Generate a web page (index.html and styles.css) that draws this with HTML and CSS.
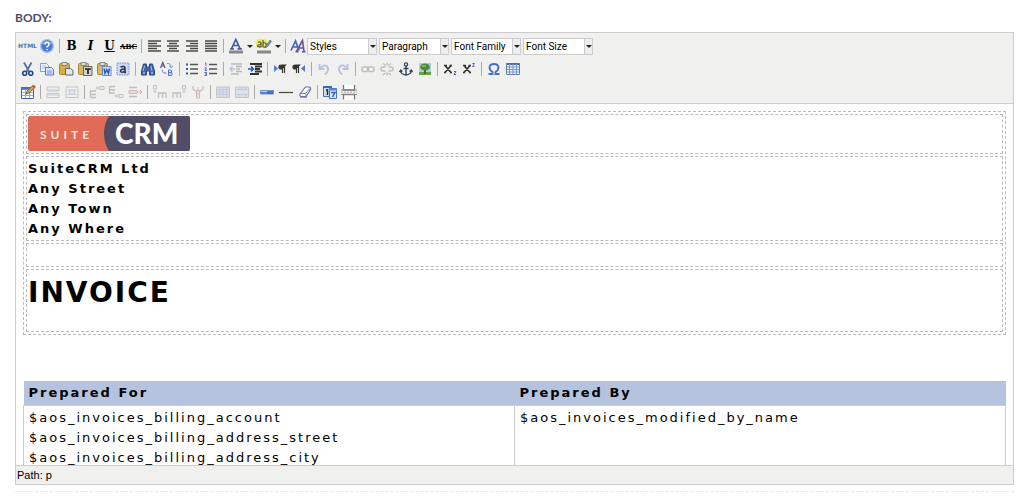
FILE: index.html
```html
<!DOCTYPE html>
<html lang="en">
<head>
<meta charset="utf-8">
<title>PDF Template</title>
<link rel="stylesheet" href="styles.css">
</head>
<body>
<main class="field">
<h2 class="field-label">BODY:</h2>
<section class="editor">
<div class="toolbar">
<div class="row">
<button class="btn" aria-label="Edit HTML source"><span class="html-word">HTML</span></button>
<button class="btn" aria-label="Help"><svg viewBox="0 0 16 16"><circle cx="8" cy="8" r="6.4" fill="#4a7bd4" stroke="#a9c1ec" stroke-width="1.4"/><path d="M3.5 6Q8 1.5 12.5 6" fill="none" stroke="#86a9e8" stroke-width="1.5"/><path d="M6 6.6q0-2 2-2t2 1.8q0 1.2-2 2.4v.8M8 11v1.3" fill="none" stroke="#fff" stroke-width="1.5"/></svg></button>
<span class="sep"></span>
<button class="btn serif bold" aria-label="Bold">B</button>
<button class="btn serif bold italic" aria-label="Italic">I</button>
<button class="btn serif bold under" aria-label="Underline">U</button>
<button class="btn serif strike" aria-label="Strikethrough">ABC</button>
<span class="sep"></span>
<button class="btn" aria-label="Align left"><svg viewBox="0 0 16 16"><path d="M2 3h13M2 5.5h9M2 8h13M2 10.5h9M2 13h13" stroke="#4a4a4a" stroke-width="1.7"/></svg></button>
<button class="btn" aria-label="Align center"><svg viewBox="0 0 16 16"><path d="M2 3h12M4 5.5h8M2 8h12M4 10.5h8M2 13h12" stroke="#4a4a4a" stroke-width="1.7"/></svg></button>
<button class="btn" aria-label="Align right"><svg viewBox="0 0 16 16"><path d="M2 3h12M6 5.5h8M2 8h12M6 10.5h8M2 13h12" stroke="#4a4a4a" stroke-width="1.7"/></svg></button>
<button class="btn" aria-label="Justify"><svg viewBox="0 0 16 16"><path d="M2 3h12M2 5.5h12M2 8h12M2 10.5h12M2 13h12" stroke="#4a4a4a" stroke-width="1.7"/></svg></button>
<span class="sep"></span>
<button class="btn" aria-label="Text colour"><svg viewBox="0 0 16 16"><path d="M3.6 10.5 7.8 1.500l4.200 9M5.300 7.500h5M2.200 10.800h3.600M9.500 10.800h4.300" fill="none" stroke="#3f5f9e" stroke-width="1.700"/><path d="M1 12.500h14v3H1z" fill="#888"/></svg></button>
<button class="drop" aria-label="More text colours"></button>
<button class="btn" aria-label="Highlight colour"><svg viewBox="0 0 16 16"><rect x="0" y="1" width="11" height="9" rx="3" fill="#f0ea62"/><path d="M2 4.200q3-1 3 1v4M5 6.500q-3.400 0-3.400 1.400T5 8.600M7 2v7.200M7 5q3.300-1 3.300 2T7 8.800" fill="none" stroke="#59562d" stroke-width="1.200"/><path d="m9 10 1.500-3 3.500-5 1.500 1.200-3.500 5z" fill="#7492c7" stroke="#596275" stroke-width=".6"/><path d="M1 12.500h14v3H1z" fill="#888"/></svg></button>
<button class="drop" aria-label="More highlight colours"></button>
<span class="sep"></span>
<button class="btn" aria-label="Edit CSS style"><svg viewBox="0 0 16 16"><path d="M1 12.500 5.500 3l3.500 9.500M3 9h5" fill="none" stroke="#4a66b5" stroke-width="1.700"/><path d="m6.500 13.500 6-11 1.500 11M8.800 10H14M5.500 13.700h3M12 13.700h3.500" fill="none" stroke="#6750a4" stroke-width="1.600"/></svg></button>
<div class="pickers">
<span class="picker"><select aria-label="Styles"><option>Styles</option></select></span>
<span class="picker"><select aria-label="Format"><option>Paragraph</option></select></span>
<span class="picker"><select aria-label="Font family"><option>Font Family</option></select></span>
<span class="picker"><select aria-label="Font size"><option>Font Size</option></select></span>
</div>
</div>
<div class="row">
<button class="btn" aria-label="Cut"><svg viewBox="0 0 16 16"><path d="m4 1.500 5 9M11.500 1.500l-5 9" stroke="#54719c" stroke-width="1.800"/><circle cx="4.700" cy="12.200" r="2" fill="none" stroke="#24478f" stroke-width="1.600"/><circle cx="10.800" cy="12.200" r="2" fill="none" stroke="#24478f" stroke-width="1.600"/></svg></button>
<button class="btn" aria-label="Copy"><svg viewBox="0 0 16 16"><path d="M1.500 2.500h6l2 2v6h-8z" fill="#f1f6ff" stroke="#7c9cdc"/><path d="M3 5h4M3 7h4" stroke="#9ab4e8"/><path d="M6.500 6.500h6l2 2v5.500h-8z" fill="#dce8ff" stroke="#5579c8"/><path d="M8 10h5M8 12h5" stroke="#6f92dc"/></svg></button>
<button class="btn" aria-label="Paste"><svg viewBox="0 0 16 16"><rect x="1.500" y="2.500" width="10" height="11" rx="1" fill="#d8ae48" stroke="#a38439"/><path d="M4 1.500h5v3H4z" fill="#d8dbe2" stroke="#777" stroke-width=".8"/><path d="M7.500 7.500h5l2.500 2v4.500H7.500z" fill="#e3e6f2" stroke="#5e6579"/></svg></button>
<button class="btn" aria-label="Paste as plain text"><svg viewBox="0 0 16 16"><rect x="1.500" y="2.500" width="10" height="11" rx="1" fill="#d8b765" stroke="#a38439"/><path d="M4 1.500h5v3H4z" fill="#d8dbe2" stroke="#777" stroke-width=".8"/><path d="M6.500 5.500h8.500v9H6.500z" fill="#cfd2d0" stroke="#666b62"/><path d="M8 8h6M11 8v5" stroke="#222" stroke-width="1.700"/></svg></button>
<button class="btn" aria-label="Paste from Word"><svg viewBox="0 0 16 16"><rect x="1.500" y="2.500" width="10" height="11" rx="1" fill="#d8b765" stroke="#a38439"/><path d="M4 1.500h5v3H4z" fill="#d8dbe2" stroke="#777" stroke-width=".8"/><path d="M6.500 5.500h8.500v9H6.500z" fill="#d5e2fc" stroke="#6887bd"/><path d="m8 7.500 1 5 1.700-4 1.700 4 1-5" fill="none" stroke="#2a56b0" stroke-width="1.400"/></svg></button>
<button class="btn" aria-label="Select all"><svg viewBox="0 0 16 16"><rect x="2" y="2" width="12" height="12" fill="#c9d6f5" stroke="#6f8ce0" stroke-dasharray="1.500 1"/><path d="M5.500 6q4.500-1.500 4.500 1v4.500h1M10 8Q5.500 8 5.500 10t4.500.500" fill="none" stroke="#333" stroke-width="1.500"/></svg></button>
<span class="sep"></span>
<button class="btn" aria-label="Find"><svg viewBox="0 0 16 16"><path d="M3.500 3h3v3h3V3h3l2 7v4H9.500v-4h-3v4h-5v-4z" fill="#4267a8" stroke="#2d4a80"/><path d="M4.500 5 3 10M11 5l1 5" stroke="#a9c2ef"/><path d="M3 12h2M11 12h2" stroke="#dbe6fa"/></svg></button>
<button class="btn" aria-label="Find and replace"><svg viewBox="0 0 16 16"><path d="m1.500 7 2.300-5.500L6 7M2.500 5h3" fill="none" stroke="#4e5c86" stroke-width="1.200"/><path d="M9.500 9v5.500h3q1.500-1.500 0-3 1-2-1-2.500zM9.500 11.500h3" fill="#cfdcff" stroke="#5372d8"/><path d="M8 2.500q4-.500 4 4l-1.800-1.500M12 6.500 14 5M3 8.500q0 4 4 4L5.500 11" fill="none" stroke="#7590e0"/></svg></button>
<span class="sep"></span>
<button class="btn" aria-label="Bullet list"><svg viewBox="0 0 16 16"><path d="M6 3.500h8M6 8h8M6 12.500h8" stroke="#555" stroke-width="1.400"/><path d="M2 2.500h2v2H2zM2 7h2v2H2zM2 11.500h2v2H2z" fill="#3b529e"/></svg></button>
<button class="btn" aria-label="Numbered list"><svg viewBox="0 0 16 16"><path d="M6 3.500h8M6 8h8M6 12.500h8" stroke="#555" stroke-width="1.400"/><path d="M2 2h1v3M1.500 7h2L2 9.500h2M1.500 11.500h2v3h-2M2 13h1.500" fill="none" stroke="#5264c8"/></svg></button>
<span class="sep"></span>
<button class="btn off" aria-label="Outdent"><svg viewBox="0 0 16 16"><path d="M3 3h11M8 5.500h6M8 8h4M8 10.500h6M3 13h8" stroke="#555" stroke-width="1.500"/><path d="M7 8H2m2.500-2.500L2 8l2.500 2.500" fill="none" stroke="#4c75cc" stroke-width="1.500"/></svg></button>
<button class="btn" aria-label="Indent"><svg viewBox="0 0 16 16"><path d="M3 3h12M8 5.500h7M8 8h5M8 10.500h7M3 13h9" stroke="#333" stroke-width="1.800"/><path d="M1 8h5M4 5.500 6.500 8 4 10.500" fill="none" stroke="#2559c8" stroke-width="1.600"/></svg></button>
<span class="sep"></span>
<button class="btn" aria-label="Left to right"><svg viewBox="0 0 16 16"><path d="m2 4 4 3.500L2 11z" fill="#4d7bd0"/><path d="M13.500 4H9.500q-2.500 0-2.500 2t2.500 2h.500zM10.500 4v8M12.500 4v8" fill="#333" stroke="#333" stroke-width="1.200"/></svg></button>
<button class="btn" aria-label="Right to left"><svg viewBox="0 0 16 16"><path d="M8.500 4H4.500Q2 4 2 6t2.500 2H5zM5.500 4v8M7.500 4v8" fill="#333" stroke="#333" stroke-width="1.200"/><path d="m14 4-4 3.500 4 3.500z" fill="#4d7bd0"/></svg></button>
<span class="sep"></span>
<button class="btn off" aria-label="Undo"><svg viewBox="0 0 16 16"><path d="M3.500 3v5h5M4 7.500q4-5 7-2t-2 8" fill="none" stroke="#5271c9" stroke-width="1.800"/></svg></button>
<button class="btn off" aria-label="Redo"><svg viewBox="0 0 16 16"><path d="M12.500 3v5h-5M12 7.500q-4-5-7-2t2 8" fill="none" stroke="#5271c9" stroke-width="1.800"/></svg></button>
<span class="sep"></span>
<button class="btn off" aria-label="Insert link"><svg viewBox="0 0 16 16"><rect x="2" y="6" width="6.500" height="4.500" rx="2" fill="none" stroke="#666" stroke-width="1.500"/><rect x="7.500" y="6" width="6.500" height="4.500" rx="2" fill="none" stroke="#666" stroke-width="1.500"/></svg></button>
<button class="btn off" aria-label="Remove link"><svg viewBox="0 0 16 16"><path d="M6.500 6H4Q2 6 2 8t2 2h2.500M9.500 6H12q2 0 2 2t-2 2H9.500M4 2.500l2.500 2M8 1.500v3M12 2.500l-2.500 2M4 14l2.500-2M8 14.500v-3M12 14l-2.500-2" fill="none" stroke="#666" stroke-width="1.400"/></svg></button>
<button class="btn" aria-label="Anchor"><svg viewBox="0 0 16 16"><circle cx="8" cy="3.500" r="1.600" fill="none" stroke="#39465f" stroke-width="1.300"/><path d="M8 5v9M5.500 7.500h5M2.500 9.500q.500 4 5.500 4.500 5-.500 5.500-4.500M1.500 11l1.200-2 1.800 1.500M14.500 11l-1.200-2-1.800 1.500" fill="none" stroke="#39465f" stroke-width="1.400"/></svg></button>
<button class="btn" aria-label="Insert image"><svg viewBox="0 0 16 16"><path d="M2 2h12v12H2z" fill="#a9cdea"/><path d="M2 11h12v3H2z" fill="#62a83d"/><path d="M7 8h2v5H7z" fill="#79542c"/><ellipse cx="8" cy="6" rx="4.800" ry="3.600" fill="#4c8d32"/><path d="M5 5h4" stroke="#91c450" stroke-width="1.500"/></svg></button>
<span class="sep"></span>
<button class="btn" aria-label="Subscript"><svg viewBox="0 0 16 16"><path d="m3 4.500 6 7M9 4.500l-6 7M2 4.500h3M7.500 4.500H10M2 11.500h2.500M7.500 11.500H10" stroke="#333" stroke-width="1.700"/><path d="M12 10.500h2l-2 3h2" fill="none" stroke="#4d67c5"/></svg></button>
<button class="btn" aria-label="Superscript"><svg viewBox="0 0 16 16"><path d="m3 4.500 6 7M9 4.500l-6 7M2 4.500h3M7.500 4.500H10M2 11.500h2.500M7.500 11.500H10" stroke="#333" stroke-width="1.700"/><path d="M11.500 2.500h2l-2 3h2" fill="none" stroke="#4d67c5"/></svg></button>
<span class="sep"></span>
<button class="btn" aria-label="Special character"><svg viewBox="0 0 16 16"><path d="M2.500 13h4v-2Q3.500 9 3.500 6.500 3.800 3 8 3t4.500 3.500Q12.500 9 9.500 11v2h4" fill="none" stroke="#4a6fcb" stroke-width="1.900"/></svg></button>
<button class="btn" aria-label="Insert table"><svg viewBox="0 0 16 16"><path d="M1.500 2.500h13v11h-13z" fill="#e7effc" stroke="#6c7fa5"/><path d="M1.500 3h13" stroke="#54719e" stroke-width="2"/><path d="M2 6h12M2 8.500h12M2 11h12M4.500 3v10M8 3v10M11.500 3v10" stroke="#7b99ce"/></svg></button>
</div>
<div class="row">
<button class="btn" aria-label="Edit table"><svg viewBox="0 0 16 16"><path d="M1.500 3.500h12v11h-12z" fill="#fff" stroke="#3c66b4"/><path d="M1 4.500h13" stroke="#416fc3" stroke-width="2.500"/><path d="M2 8.500h11M2 11.500h11M5.500 6v8M9.500 6v8" stroke="#8ba8df"/><path d="m6 10 1-3 6-5.500 2 2L9 9z" fill="#dca24e" stroke="#765227" stroke-width=".8"/><path d="m13 1.500 2 2" stroke="#c34e3f" stroke-width="2"/></svg></button>
<span class="sep"></span>
<button class="btn off" aria-label="Row properties"><svg viewBox="0 0 16 16"><path d="M2 3h12v4H2zM2 9.500h12v4H2z" fill="#eee" stroke="#777"/><path d="M3 6h10M3 11h10" stroke="#6f8fce"/></svg></button>
<button class="btn off" aria-label="Cell properties"><svg viewBox="0 0 16 16"><path d="M2 3h12v10.500H2z" fill="#eee" stroke="#777"/><path d="M2 6h12M2 10.500h12" stroke="#aaa"/><path d="M5.500 6h5v4.500h-5z" fill="#c5d1ed" stroke="#758dc5"/></svg></button>
<span class="sep"></span>
<button class="btn off" aria-label="Insert row before"><svg viewBox="0 0 16 16"><path d="M1.500 14v-7H7M2 10.500h5M2 13.500h5" fill="none" stroke="#666" stroke-width="1.300"/><path d="M11 2.500h4v3h-4zM11 4H7.500m1.500-1.500L7.500 4 9 5.500" fill="none" stroke="#666"/></svg></button>
<button class="btn off" aria-label="Insert row after"><svg viewBox="0 0 16 16"><path d="M1.500 2v7H7M2 2.500h5M2 6h5" fill="none" stroke="#666" stroke-width="1.300"/><path d="M11 10.500h4v3h-4zM11 12H7.500M9 10.500 7.500 12 9 13.500" fill="none" stroke="#666"/></svg></button>
<button class="btn off" aria-label="Delete row"><svg viewBox="0 0 16 16"><path d="M2 3.500h8M2 12.500h8" stroke="#666" stroke-width="1.300"/><path d="M2 6.500h8v3H2z" fill="#edaaaa" stroke="#965a5a"/><path d="M10 8h5m-2-2 2 2-2 2" fill="none" stroke="#a85454"/></svg></button>
<span class="sep"></span>
<button class="btn off" aria-label="Insert column before"><svg viewBox="0 0 16 16"><path d="M6.500 14V9H14v5M10.500 9v5" fill="none" stroke="#666" stroke-width="1.300"/><path d="M1.500 1.500h3V5h-3zM3 5v3M1.500 7 3 8.500 4.500 7" fill="none" stroke="#5b6d9f"/></svg></button>
<button class="btn off" aria-label="Insert column after"><svg viewBox="0 0 16 16"><path d="M2 14V9h7.500v5M6 9v5" fill="none" stroke="#666" stroke-width="1.300"/><path d="M11.500 1.500h3V5h-3zM13 5v3M11.500 7 13 8.500 14.500 7" fill="none" stroke="#5b6d9f"/></svg></button>
<button class="btn off" aria-label="Delete column"><svg viewBox="0 0 16 16"><path d="M3 2v3l4 3M13 2v3L9 8" fill="none" stroke="#666" stroke-width="1.200"/><path d="M6.500 6.500h3V14h-3z" fill="#edaaaa" stroke="#a85454"/><path d="M8 6V3" stroke="#a85454"/></svg></button>
<span class="sep"></span>
<button class="btn off" aria-label="Split cells"><svg viewBox="0 0 16 16"><path d="M1.500 3h13v10.500h-13z" fill="#b9caee" stroke="#777"/><path d="M2 5.500h12M2 8h12M2 10.500h12M5 3v10M8 3v10M11.500 3v10" stroke="#6985c1"/></svg></button>
<button class="btn off" aria-label="Merge cells"><svg viewBox="0 0 16 16"><path d="M1.500 3h13v10.500h-13z" fill="#b9caee" stroke="#777"/><path d="M2 5.500h12M2 10.500h12M5 3v2.500M8 3v2.500M11.500 3v2.500M5 10.500v3M11.500 10.500v3" stroke="#6985c1"/></svg></button>
<span class="sep"></span>
<button class="btn" aria-label="Advanced rule"><svg viewBox="0 0 16 16"><path d="M1.500 6.500h13v3.500h-13z" fill="#567fca" stroke="#6d8ec4"/><path d="M2 7.500h6" stroke="#bed3fb"/><path d="M8 9h6" stroke="#2459b0"/></svg></button>
<button class="btn" aria-label="Horizontal rule"><svg viewBox="0 0 16 16"><path d="M1 8.500h14" stroke="#444" stroke-width="1.200"/></svg></button>
<button class="btn" aria-label="Remove formatting"><svg viewBox="0 0 16 16"><path d="M3 10 8.500 3h3.500q2 0 1.500 2.500L9 12.500H4Q2.500 12 3 10z" fill="#fff" stroke="#6b7591" stroke-width="1.200"/><path d="M3.500 9.500H8q1.500.500 1 2.500M8.500 9.500l5-5.500" fill="none" stroke="#6385c8"/><path d="M3 13.200h7" stroke="#5978c4"/></svg></button>
<span class="sep"></span>
<button class="btn" aria-label="Insert date"><svg viewBox="0 0 16 16"><path d="M1.500 2.500h8v10h-8z" fill="#c8daf8" stroke="#4671bd"/><path d="M1 3h9" stroke="#3b69bc" stroke-width="2"/><path d="M4 6h1.500v5" fill="none" stroke="#222" stroke-width="1.400"/><path d="M7.500 4.500h7v10h-7z" fill="#dce7fd" stroke="#4671bd"/><path d="M7 5.500h8" stroke="#5986d5" stroke-width="2"/><path d="M9 8.500h4L10.500 13" fill="none" stroke="#345dad" stroke-width="1.500"/></svg></button>
<button class="btn" aria-label="Page break"><svg viewBox="0 0 16 16"><path d="M2.500 1v5h11V1M2.500 15.500V10.500h11v5" fill="#fff" stroke="#777" stroke-width="1.300"/><path d="M0 6h16M0 10.500h16" stroke="#888"/><path d="M0 8.200h16" stroke="#aaa" stroke-dasharray="2 1"/></svg></button>
</div>
</div>
<div class="canvas">
<table class="company">
<tr><td class="logo-cell"><svg class="logo" viewBox="0 0 162 35" role="img" aria-label="SuiteCRM">
<rect width="162" height="35" rx="2" fill="#e06b56"/>
<path d="M81 0h79a2 2 0 0 1 2 2v31a2 2 0 0 1-2 2H81Q76 27 76 17.500T81 0z" fill="#524d66"/>
<text class="logo-suite" x="12" y="23">SUITE</text><text class="logo-crm" x="87" y="28">CRM</text></svg></td></tr>
<tr><td class="strong">SuiteCRM Ltd<br>Any Street<br>Any Town<br>Any Where</td></tr>
<tr><td>&nbsp;</td></tr>
<tr><td class="title-cell"><h1 class="title">INVOICE</h1></td></tr>
</table>
<table class="parties">
<thead><tr><th>Prepared For</th><th>Prepared By</th></tr></thead>
<tbody><tr><td>$aos_invoices_billing_account<br>$aos_invoices_billing_address_street<br>$aos_invoices_billing_address_city</td><td>$aos_invoices_modified_by_name</td></tr></tbody>
</table>
</div>
<div class="status">Path: p</div>
</section>
<div class="divider"></div>
</main>
</body>
</html>
```
FILE: styles.css
```css
* { box-sizing: border-box; }
body { margin: 0; background: #fff; color: #000; font-family: "DejaVu Sans", Verdana, sans-serif; }
.field { padding: 10px 10px 0 15px; }
.field-label { margin: 0 0 7px; font: bold 12px/15px Lato, sans-serif; color: #534d64; }
.editor { border: 1px solid #ccc; }
.toolbar { display: flex; flex-direction: column; gap: 1px; padding: 2px 2px 0; background: #f0f0ee; border-bottom: 1px solid #ccc; }
.row { display: flex; align-items: center; height: 22px; }
.btn { display: flex; flex: none; align-items: center; justify-content: center; width: 19px; height: 20px; padding: 0; border: 0; background: none; color: #000; }
.btn svg { display: block; width: 16px; height: 16px; }
.off { opacity: .35; }
.html-word { font: bold 6px/8px "DejaVu Sans", sans-serif; color: #4a77b8; }
.serif { font-family: "DejaVu Serif", serif; font-size: 12px; }
.bold { font-weight: bold; }
.italic { font-style: italic; }
.under { text-decoration: underline; }
.strike { font-size: 7px; font-weight: bold; text-decoration: line-through; }
.sep { flex: none; width: 6px; height: 14px; background: linear-gradient(#aaa, #aaa) center / 1px 100% no-repeat; }
.drop { flex: none; width: 9px; height: 20px; padding: 0; border: 0; background: none; }
.drop::after { content: ""; display: block; margin: 0 auto; width: 0; border: solid transparent; border-width: 3px 3px 0; border-top-color: #222; }
.pickers { display: flex; gap: 2px; }
.picker { position: relative; width: 70px; height: 17px; }
.picker select { display: block; width: 100%; height: 100%; padding: 0 8px 0 2px; border: 1px solid #ccc; border-radius: 0; appearance: none; background: linear-gradient(90deg, #ccc 1px, #eee 1px) right / 8px 100% no-repeat #fff; color: #000; font: 10px/15px Roboto, sans-serif; }
.picker::after { content: ""; position: absolute; right: 1px; top: 7px; border: solid transparent; border-width: 3px 3px 0; border-top-color: #222; pointer-events: none; }
.canvas { height: 361px; padding: 7px; overflow: hidden; font-size: 13px; line-height: 20px; letter-spacing: 2px; }
.company { width: 100%; border: 1px dashed #bbb; border-spacing: 2px; }
.company td { height: 24px; padding: 1px; border: 1px dashed #bbb; vertical-align: top; }
.company .logo-cell { padding-bottom: 2px; }
.logo { display: block; width: 162px; height: 35px; }
.logo-suite { font: bold 12px Lato, sans-serif; letter-spacing: 4px; fill: #fae3dd; }
.logo-crm { font: 900 28px Lato, sans-serif; letter-spacing: 0; fill: #fff; }
.company .strong { padding-top: 2px; font-weight: bold; }
.company .title-cell { height: 63px; }
.title { margin: 5px 0 20px; font-size: 28px; line-height: 34px; }
.parties { width: 100%; margin-top: 46px; border-collapse: collapse; table-layout: fixed; }
.parties th { height: 24px; padding: 2px 5px; background: #b5c3df; text-align: left; }
.parties td { height: 90px; padding: 2px 5px; border: 1px solid #ccc; vertical-align: top; }
.status { padding: 1px; background: #f0f0ee; border-top: 1px solid #ccc; font: 11px/16px "Liberation Sans", Arial, sans-serif; }
.divider { margin-top: 6px; border-top: 1px dashed #e8e8e8; }
```
